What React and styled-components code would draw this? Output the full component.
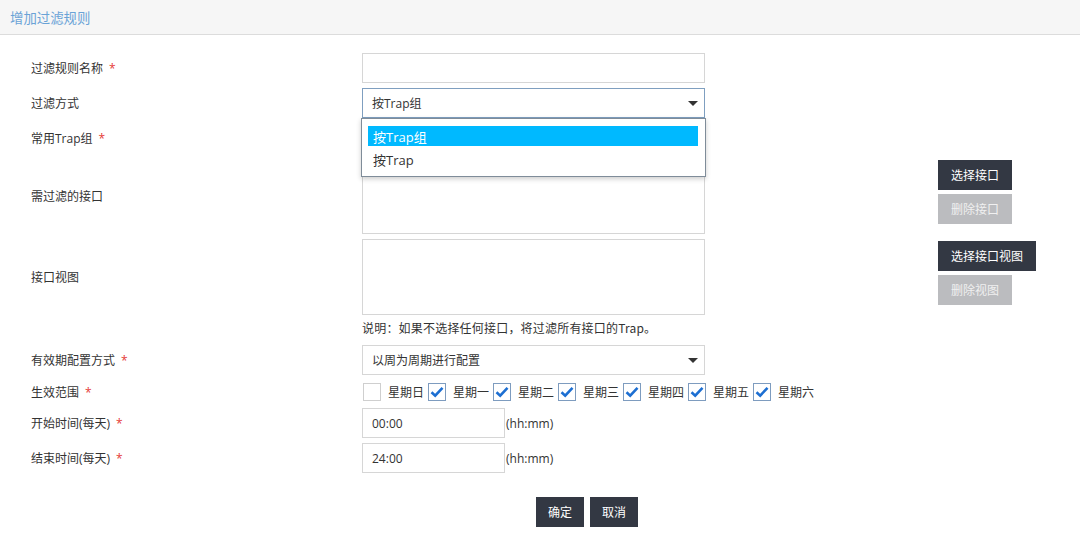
import React from "react";
import styled, { createGlobalStyle } from "styled-components";

const Global = createGlobalStyle`
  html, body { margin: 0; padding: 0; background: #fff; }
  body { font-family: "Open Sans", "Noto Sans CJK SC", sans-serif; font-size: 12px; color: #333; }
  * { box-sizing: border-box; }
`;

const Header = styled.div`
  height: 35px;
  background: #f6f6f6;
  border-bottom: 1px solid #dcdcdc;
  display: flex;
  align-items: center;
  padding-left: 10px;
  font-size: 13.4px;
  color: #6aa3d6;
`;

const Form = styled.div`
  padding: 18px 0 0 31px;
  display: flex;
  flex-direction: column;
  gap: 5px;
`;

const Row = styled.div`
  display: flex;
  align-items: center;
  min-height: ${(p) => p.$h || 30}px;
`;

const Label = styled.div`
  width: 331px;
  flex-shrink: 0;
  color: #333;
`;

const Star = styled.span`
  color: #e53935;
  margin-left: 6px;
`;

const Field = styled.div`
  position: relative;
  width: 343px;
  flex-shrink: 0;
`;

const Input = styled.div`
  width: ${(p) => p.$w || 343}px;
  height: ${(p) => p.$h || 30}px;
  border: 1px solid #d6d6d6;
  background: #fff;
  padding-left: 9px;
  display: flex;
  align-items: center;
  color: #333;
`;

const Select = styled.div`
  width: 343px;
  height: 30px;
  border: 1px solid ${(p) => (p.$focus ? "#7f9fc0" : "#d6d6d6")};
  background: #fff;
  padding-left: 9px;
  display: flex;
  align-items: center;
  justify-content: space-between;
  padding-right: 6px;
`;

const Arrow = styled.span`
  width: 0;
  height: 0;
  border-left: 5px solid transparent;
  border-right: 5px solid transparent;
  border-top: 5px solid #333;
`;

const Menu = styled.div`
  position: absolute;
  top: 30px;
  left: -1px;
  width: 345px;
  height: 59px;
  border: 1px solid #7f8c99;
  background: #fff;
  box-shadow: 0 2px 5px rgba(0, 0, 0, 0.2);
  padding: 7px 7px 0 6px;
  z-index: 5;
`;

const Option = styled.div`
  height: 20px;
  margin-bottom: 3px;
  display: flex;
  align-items: center;
  padding-left: 5px;
  font-size: 13px;
  background: ${(p) => (p.$active ? "#00b9ff" : "transparent")};
  color: ${(p) => (p.$active ? "#fff" : "#333")};
`;

const Side = styled.div`
  align-self: flex-start;
  margin-top: 2px;
  margin-left: 233px;
  display: flex;
  flex-direction: column;
  align-items: flex-start;
  gap: 4px;
`;

const Btn = styled.button`
  height: 30px;
  padding: 0 ${(p) => (p.$pad ? p.$pad : 13)}px;
  border: none;
  font-family: inherit;
  font-size: 12px;
  background: ${(p) => (p.$disabled ? "#bbbcbf" : "#333843")};
  color: ${(p) => (p.$disabled ? "#f0f0f0" : "#fff")};
  cursor: pointer;
`;

const Note = styled.div`
  margin-left: 331px;
  margin-top: -5px;
  height: 25px;
  display: flex;
  align-items: center;
  letter-spacing: 0.2px;
  text-spacing-trim: space-all;
  font-family: "Noto Sans CJK SC", "Open Sans", sans-serif;
`;

const Days = styled.div`
  display: flex;
  align-items: center;
  padding-left: 1px;
`;

const Day = styled.label`
  display: flex;
  align-items: center;
  margin-right: 4px;
  font-size: 12px;
`;

const Box = styled.span`
  width: 18px;
  height: 18px;
  border: 1px solid ${(p) => (p.$checked ? "#7e9cbf" : "#cfcfcf")};
  background: #fff;
  display: inline-flex;
  align-items: center;
  justify-content: center;
  margin-right: 7px;
`;

const Unit = styled.span`
  margin-left: 1px;
`;

const Footer = styled.div`
  display: flex;
  gap: 6px;
  margin-left: 505px;
  margin-top: 19px;
`;

const Check = () => (
  <svg width="14" height="12" viewBox="0 0 14 12">
    <path d="M1.5 6.2 L5.2 9.6 L12.5 1.8" fill="none" stroke="#1d6fd2" strokeWidth="2.6" />
  </svg>
);

const days = ["星期日", "星期一", "星期二", "星期三", "星期四", "星期五", "星期六"];

export default function App() {
  return (
    <>
      <Global />
      <Header>增加过滤规则</Header>
      <Form>
        <Row>
          <Label>过滤规则名称<Star>*</Star></Label>
          <Field><Input /></Field>
        </Row>
        <Row>
          <Label>过滤方式</Label>
          <Field>
            <Select $focus>按Trap组<Arrow /></Select>
            <Menu>
              <Option $active>按Trap组</Option>
              <Option>按Trap</Option>
            </Menu>
          </Field>
        </Row>
        <Row>
          <Label>常用Trap组<Star>*</Star></Label>
          <Field><Select>&nbsp;<Arrow /></Select></Field>
        </Row>
        <Row $h={76}>
          <Label>需过滤的接口</Label>
          <Field><Input $h={76} /></Field>
          <Side>
            <Btn>选择接口</Btn>
            <Btn $disabled>删除接口</Btn>
          </Side>
        </Row>
        <Row $h={76}>
          <Label>接口视图</Label>
          <Field><Input $h={76} /></Field>
          <Side>
            <Btn>选择接口视图</Btn>
            <Btn $disabled>删除视图</Btn>
          </Side>
        </Row>
        <Note>说明：如果不选择任何接口，将过滤所有接口的Trap。</Note>
        <Row>
          <Label>有效期配置方式<Star>*</Star></Label>
          <Field><Select>以周为周期进行配置<Arrow /></Select></Field>
        </Row>
        <Row $h={23}>
          <Label>生效范围<Star>*</Star></Label>
          <Days>
            {days.map((d, i) => (
              <Day key={d}>
                <Box $checked={i > 0}>{i > 0 && <Check />}</Box>
                {d}
              </Day>
            ))}
          </Days>
        </Row>
        <Row>
          <Label>开始时间(每天)<Star>*</Star></Label>
          <Input $w={143}>00:00</Input>
          <Unit>(hh:mm)</Unit>
        </Row>
        <Row>
          <Label>结束时间(每天)<Star>*</Star></Label>
          <Input $w={143}>24:00</Input>
          <Unit>(hh:mm)</Unit>
        </Row>
        <Footer>
          <Btn $pad={12}>确定</Btn>
          <Btn $pad={12}>取消</Btn>
        </Footer>
      </Form>
    </>
  );
}
